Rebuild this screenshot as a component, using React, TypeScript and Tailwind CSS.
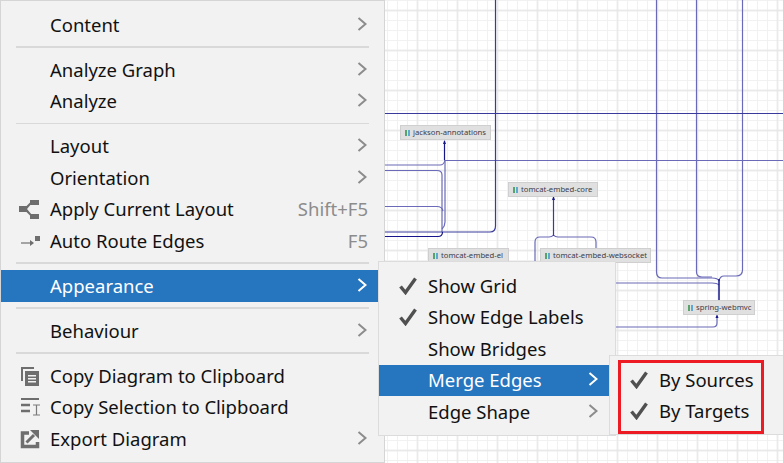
import React from 'react';

// --- small icons drawn to match the reference ---
const Chevron = ({ light = false }: { light?: boolean }) => (
    <svg width="10" height="14" viewBox="0 0 10 14" fill="none" className="shrink-0 -translate-x-[1px] -translate-y-[1px]">
        <path d="M1.5 1 L8.5 7 L1.5 13" stroke={light ? '#ffffff' : '#8c8c8c'} strokeWidth="2" />
    </svg>
);

const Check = () => (
    <svg width="18" height="18" viewBox="0 0 18 18" fill="none" className="-translate-x-[1px]">
        <path d="M1.5 9.5 L6.5 15.5 L16.5 1.5" stroke="#505050" strokeWidth="3.4" />
    </svg>
);

const ApplyLayoutIcon = () => (
    <svg width="22" height="22" viewBox="0 0 22 22" fill="#6e6e6e">
        <rect x="1" y="8" width="8" height="6" />
        <rect x="12" y="2" width="9" height="5" />
        <rect x="12" y="16" width="9" height="5" />
        <path d="M7 9.5 L13 3.5 L14 5 L9 11 L14 17 L13 18.5 L7 12.5 Z" />
    </svg>
);

const AutoRouteIcon = () => (
    <svg width="22" height="12" viewBox="0 0 22 12" fill="none">
        <path d="M3 8 H13" stroke="#8a8a8a" strokeWidth="1.5" />
        <path d="M12 5 L16 8 L12 11 Z" fill="#6e6e6e" />
        <rect x="17" y="1" width="5" height="5" fill="#6e6e6e" />
    </svg>
);

const CopyDiagramIcon = () => (
    <svg width="20" height="20" viewBox="0 0 20 20" fill="#6e6e6e">
        <path d="M1 1 H14 V3 H3 V15 H1 Z" />
        <path d="M5 5 H19 V20 H5 Z M8 9 V10.5 H16 V9 Z M8 12 V13.5 H16 V12 Z M8 15 V16.5 H16 V15 Z" fillRule="evenodd" />
    </svg>
);

const CopySelectionIcon = () => (
    <svg width="20" height="20" viewBox="0 0 20 20" fill="none">
        <path d="M1 2 H19" stroke="#6e6e6e" strokeWidth="2" />
        <path d="M1 8 H10" stroke="#6e6e6e" strokeWidth="2.5" />
        <path d="M1 14 H10" stroke="#6e6e6e" strokeWidth="2.5" />
        <path d="M13 8 H20 M16.5 8 V18 M13 18 H20" stroke="#7a7a7a" strokeWidth="1.2" />
    </svg>
);

const ExportIcon = () => (
    <svg width="20" height="20" viewBox="0 0 20 20" fill="none">
        <path d="M9 4 H2.5 V17.5 H17.5 V13" stroke="#6e6e6e" strokeWidth="3.5" />
        <path d="M10 1 H19 V10 Z" fill="#6e6e6e" />
        <path d="M6.5 13.5 L14 6" stroke="#6e6e6e" strokeWidth="3" />
    </svg>
);

// --- menu pieces ---
type RowProps = {
    label: string;
    icon?: React.ReactNode;
    shortcut?: string;
    sub?: boolean;
    active?: boolean;
};

const Row = ({ label, icon, shortcut, sub, active }: RowProps) => (
    <div className={`flex h-[31.5px] items-center pr-[16px] text-[18.5px] ${active ? 'bg-[#2675bf] text-white' : 'text-[#111111]'}`}>
        <div className="flex w-[49px] shrink-0 items-center justify-end pr-[10px]">{icon}</div>
        <span className="flex-1 whitespace-nowrap">{label}</span>
        {shortcut && <span className="text-[#8c8c8c]">{shortcut}</span>}
        {sub && <Chevron light={active} />}
    </div>
);

const Separator = ({ thick = false }: { thick?: boolean }) => (
    <div className="flex h-[13.5px] items-center px-[15px]">
        <div className={`w-full bg-[#d9d9d9] ${thick ? 'h-[2px]' : 'h-[1px]'}`} />
    </div>
);

// --- diagram behind the menus ---
const Node = ({ label, className }: { label: string; className: string }) => (
    <div className={`absolute flex h-[15px] items-center gap-[3px] border border-[#cfcfcf] bg-[#e0e0e0] pl-[4px] text-[7.7px] text-[#3c3c4a] ${className}`}>
        <span className="flex shrink-0 gap-px">
            <span className="h-[6px] w-[2px] bg-[#5aa469]" />
            <span className="h-[6px] w-[2px] bg-[#5fa8d3]" />
        </span>
        <span className="whitespace-nowrap">{label}</span>
    </div>
);

const Canvas = () => (
    <svg width="783" height="463" className="absolute inset-0">
        <defs>
            <pattern id="minor" width="10" height="10" patternUnits="userSpaceOnUse" x="7" y="0">
                <path d="M0.5 0 V10 M0 0.5 H10" stroke="#f1f1f1" fill="none" />
            </pattern>
            <pattern id="major" width="40" height="40" patternUnits="userSpaceOnUse" x="16.5" y="9.5">
                <path d="M1 0 V40 M0 1 H40" stroke="#e6e6e6" strokeWidth="1.3" fill="none" />
            </pattern>
        </defs>
        <rect width="783" height="463" fill="url(#minor)" />
        <rect width="783" height="463" fill="url(#major)" />
        <g fill="none" stroke="#6a6ab8" strokeWidth="1.2">
            <path d="M656.5 0 V272 Q656.5 278 662 278 H712 Q718 278 719 281" />
            <path d="M696.5 0 V272 Q696.5 277 702 277 H712" />
            <path d="M742.5 0 V270 Q742.5 276 736 276 H724 Q720 276 719 281" />
            <path d="M616 283 H712 Q717 283 719 285" />
            <path d="M616 327 H713 Q717 327 717 323 V316" />
            <path d="M445 160.5 H783" />
            <path d="M385 165 H440 Q444 165 445 160" />
            <path d="M385 170.5 H437 Q442 170.5 442 175 V232" />
            <path d="M385 206.5 H437 Q442 206.5 443 211" />
            <path d="M445 160 V222 Q445 226 442 229" />
            <path d="M535 262 V242 Q535 237 540 237 H549 Q552 237 553.5 235 Q555 237 558 237 H591 Q596 237 596 242 V249" />
        </g>
        <g fill="none" stroke="#3a3a9c" strokeWidth="1.2">
            <path d="M495.5 0 V226 Q495.5 232 490 232 H385" />
            <path d="M385 113.5 H783" />
            <path d="M553.5 197 V236" />
        </g>
        <g fill="none" stroke="#16168a" strokeWidth="1.2">
            <path d="M444.5 141 V160" />
            <path d="M385 236.5 H438 Q442.5 236.5 442.5 232" />
            <path d="M719 279 V300" strokeWidth="1.5" />
        </g>
        <g fill="#16168a">
            <path d="M443 144 L444.5 140 L446 144 Z" />
            <path d="M552 200 L553.5 196 L555 200 Z" />
            <path d="M715.5 318 L717 314 L718.5 318 Z" />
        </g>
    </svg>
);

export default function App() {
    return (
        <div className="relative h-[463px] w-[783px] overflow-hidden bg-white font-['Noto_Sans',sans-serif]">
            <Canvas />
            <Node label="jackson-annotations" className="left-[400px] top-[125px] w-[91px]" />
            <Node label="tomcat-embed-core" className="left-[508px] top-[182px] w-[90px]" />
            <Node label="tomcat-embed-el" className="left-[428px] top-[248px] w-[81px]" />
            <Node label="tomcat-embed-websocket" className="left-[540px] top-[248px] w-[111px]" />
            <Node label="spring-webmvc" className="left-[683px] top-[300px] w-[72px]" />

            {/* menu principal */}
            <div className="absolute left-0 top-0 h-[463px] w-[385px] border border-[#d5d5d5] bg-[#f2f2f2] pt-[8px]">
                <Row label="Content" sub />
                <Separator thick />
                <Row label="Analyze Graph" sub />
                <Row label="Analyze" sub />
                <Separator />
                <Row label="Layout" sub />
                <Row label="Orientation" sub />
                <Row label="Apply Current Layout" shortcut="Shift+F5" icon={<ApplyLayoutIcon />} />
                <Row label="Auto Route Edges" shortcut="F5" icon={<AutoRouteIcon />} />
                <Separator thick />
                <Row label="Appearance" sub active />
                <Separator thick />
                <Row label="Behaviour" sub />
                <Separator thick />
                <Row label="Copy Diagram to Clipboard" icon={<CopyDiagramIcon />} />
                <Row label="Copy Selection to Clipboard" icon={<CopySelectionIcon />} />
                <Row label="Export Diagram" sub icon={<ExportIcon />} />
            </div>

            {/* submenu Appearance */}
            <div className="absolute left-[378px] top-[261px] h-[175px] w-[238px] border border-[#dcdcdc] bg-[#f2f2f2] pt-[8px]">
                <Row label="Show Grid" icon={<Check />} />
                <Row label="Show Edge Labels" icon={<Check />} />
                <Row label="Show Bridges" />
                <Row label="Merge Edges" sub active />
                <Row label="Edge Shape" sub />
            </div>

            {/* submenu Merge Edges */}
            <div className="absolute left-[609px] top-[355px] h-[80px] w-[175px] border border-[#dcdcdc] bg-[#f2f2f2] pt-[8px]">
                <Row label="By Sources" icon={<Check />} />
                <Row label="By Targets" icon={<Check />} />
            </div>

            {/* marcação vermelha */}
            <div className="absolute left-[618px] top-[360px] h-[74px] w-[146px] border-[3px] border-[#ed1c24]" />
        </div>
    );
}
